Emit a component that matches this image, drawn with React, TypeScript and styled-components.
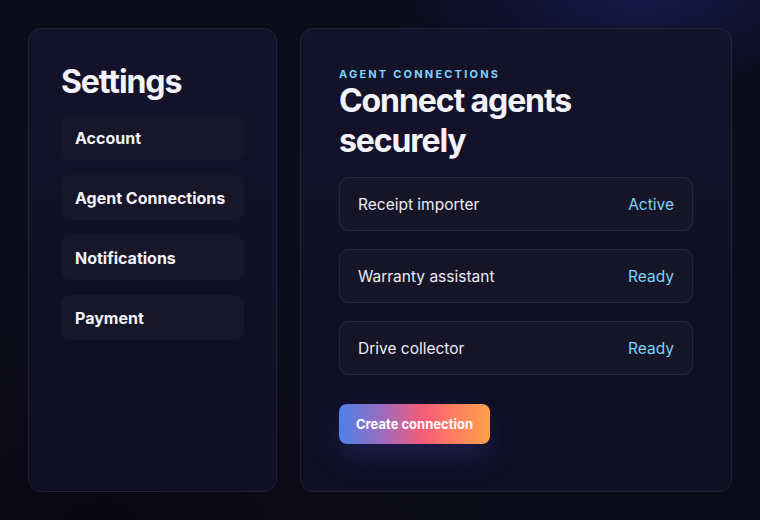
import styled, { createGlobalStyle } from "styled-components";

const GlobalStyle = createGlobalStyle`
  html, body {
    margin: 0;
    padding: 0;
    background: #0b0a17;
  }
  body {
    font-family: Inter, "Noto Sans", sans-serif;
    -webkit-font-smoothing: antialiased;
  }
`;

type Agent = {
    name: string;
    status: string;
}

const agents: Agent[] = [
    {name: "Receipt importer", status: "Active"},
    {name: "Warranty assistant", status: "Ready"},
    {name: "Drive collector", status: "Ready"},
];

const navItems = ["Account", "Agent Connections", "Notifications", "Payment"];

export default function App() {
    return <>
        <GlobalStyle/>
        <Page>
            <Sidebar>
                <SidebarTitle>Settings</SidebarTitle>
                <NavList>
                    {navItems.map(item => <NavItem key={item}>{item}</NavItem>)}
                </NavList>
            </Sidebar>
            <Main>
                <Eyebrow>Agent connections</Eyebrow>
                <Heading>Connect agents securely</Heading>
                <AgentList>
                    {agents.map(agent => <AgentRow key={agent.name}>
                        <AgentName>{agent.name}</AgentName>
                        <AgentStatus>{agent.status}</AgentStatus>
                    </AgentRow>)}
                </AgentList>
                <CreateButton>Create connection</CreateButton>
            </Main>
        </Page>
    </>
}

const Page = styled.div`
    width: 760px;
    height: 520px;
    box-sizing: border-box;
    padding: 28px;
    
    display: grid;
    grid-template-columns: 249px 1fr;
    gap: 23px;
    
    background:
        radial-gradient(ellipse 260px 90px at 640px 0px, rgba(30, 32, 110, 0.55), transparent 100%),
        radial-gradient(ellipse 400px 200px at 100px 520px, rgba(0, 0, 0, 0.35), transparent 100%),
        #0c0b19;
    overflow: hidden;
`;

const Panel = styled.section`
    box-sizing: border-box;
    border: 1px solid rgba(255, 255, 255, 0.07);
    border-radius: 14px;
    background: linear-gradient(180deg, #14132a 0%, #0f0e22 100%);
    
    display: flex;
    flex-direction: column;
    align-items: stretch;
`;

const Sidebar = styled(Panel)`
    padding: 35px 32px;
`;

const SidebarTitle = styled.h1`
    margin: 0 0 15px 0;
    font-size: 32px;
    line-height: 36px;
    font-weight: 700;
    letter-spacing: -1.1px;
    color: #f4f3fb;
`;

const NavList = styled.ul`
    list-style: none;
    margin: 0;
    padding: 0;
    
    display: flex;
    flex-direction: column;
    gap: 15px;
`;

const NavItem = styled.li`
    height: 45px;
    box-sizing: border-box;
    padding: 0 14px;
    
    display: flex;
    align-items: center;
    
    border-radius: 9px;
    background: #181729;
    
    color: #f4f3fb;
    font-size: 16px;
    font-weight: 700;
`;

const Main = styled(Panel)`
    padding: 38px 38px;
`;

const Eyebrow = styled.p`
    margin: 0;
    font-size: 11px;
    line-height: 14px;
    font-weight: 700;
    letter-spacing: 2.2px;
    text-transform: uppercase;
    color: #7dd3fc;
`;

const Heading = styled.h2`
    margin: 0 0 16px 0;
    max-width: 270px;
    font-size: 32px;
    line-height: 40px;
    font-weight: 700;
    letter-spacing: -1.1px;
    color: #f4f3fb;
`;

const AgentList = styled.div`
    display: flex;
    flex-direction: column;
    gap: 18px;
`;

const AgentRow = styled.div`
    height: 54px;
    box-sizing: border-box;
    padding: 0 18px;
    
    display: flex;
    justify-content: space-between;
    align-items: center;
    
    border: 1px solid rgba(255, 255, 255, 0.08);
    border-radius: 10px;
    background: #161527;
`;

const AgentName = styled.span`
    font-size: 15.5px;
    color: #eceaf5;
`;

const AgentStatus = styled.span`
    font-size: 15.5px;
    font-weight: 400;
    color: #7dd3fc;
`;

const CreateButton = styled.button`
    align-self: flex-start;
    margin-top: 29px;
    width: 151px;
    height: 40px;
    
    border: none;
    border-radius: 8px;
    background: linear-gradient(90deg, #4b82ea 0%, #9a6cc0 28%, #f45b78 55%, #ff7c62 75%, #ffa04a 100%);
    box-shadow: 0 12px 30px rgba(70, 70, 190, 0.28);
    
    color: #ffffff;
    font-family: Inter, "Noto Sans", sans-serif;
    font-size: 13px;
    font-weight: 700;
    
    &:hover {
        cursor: pointer;
    }
`;
